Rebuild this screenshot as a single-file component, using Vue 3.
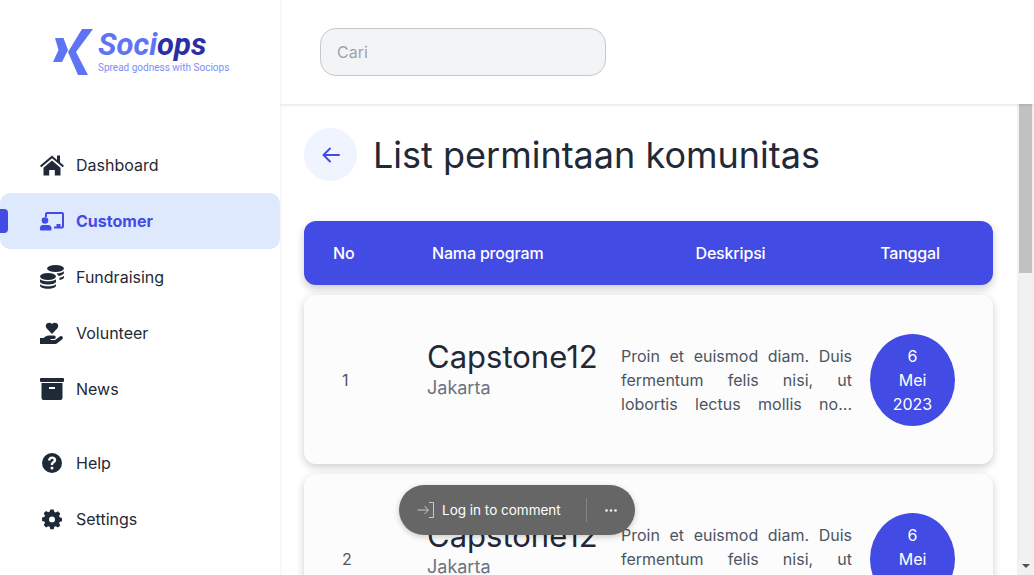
<template>
  <div class="app">
    <aside class="sidebar">
      <div class="brand">
        <svg class="brand-mark" viewBox="0 0 40 46" width="40" height="46">
          <path d="M2 9h8.500L15 21 9 33H0L5.500 21z" fill="#5f74f5" />
          <path d="M29 0H40L23 23 35 46H25L15 23z" fill="#5f74f5" />
        </svg>
        <div class="brand-text">
          <div class="brand-name">Soci<span>ops</span></div>
          <div class="brand-sub">Spread godness with Sociops</div>
        </div>
      </div>

      <nav class="menu">
        <a v-for="item in mainMenu" :key="item.label" class="menu-item" :class="{ active: item.active }">
          <svg class="menu-icon" viewBox="0 0 24 24" width="24" height="24" v-html="item.icon"></svg>
          <span>{{ item.label }}</span>
        </a>
      </nav>

      <nav class="menu menu-bottom">
        <a v-for="item in bottomMenu" :key="item.label" class="menu-item">
          <svg class="menu-icon" viewBox="0 0 24 24" width="24" height="24" v-html="item.icon"></svg>
          <span>{{ item.label }}</span>
        </a>
      </nav>
    </aside>

    <div class="right">
      <header class="topbar">
        <input class="search" type="text" placeholder="Cari" />
      </header>

      <div class="body">
        <main class="content">
          <div class="title-row">
            <button class="back">
              <svg viewBox="0 0 24 24" width="24" height="24" fill="none" stroke="#434be5" stroke-width="2" stroke-linecap="round" stroke-linejoin="round">
                <path d="M20 12H5M11 5.500 4.500 12l6.500 6.500" />
              </svg>
            </button>
            <h1>List permintaan komunitas</h1>
          </div>

          <div class="table-head">
            <div class="th-no">No</div>
            <div class="th-name">Nama program</div>
            <div class="th-desc">Deskripsi</div>
            <div class="th-date">Tanggal</div>
          </div>

          <div v-for="n in 2" :key="n" class="row">
            <div class="no">{{ n }}</div>
            <div class="program">
              <div class="program-name">Capstone12</div>
              <div class="program-city">Jakarta</div>
            </div>
            <p class="desc">Proin et euismod diam. Duis fermentum felis nisi, ut lobortis lectus mollis no...</p>
            <div class="date">
              <div class="date-circle">6<br />Mei<br />2023</div>
            </div>
          </div>
        </main>

        <div class="scrollbar">
          <div class="scroll-thumb"></div>
          <div class="scroll-arrow"></div>
        </div>
      </div>
    </div>

    <div class="comment-pill">
      <svg viewBox="0 0 18 18" width="18" height="18" fill="none" stroke="#c9c9c9" stroke-width="1">
        <path d="M0.500 9H11M7.500 5 11.500 9 7.500 13M12 1.500h4.500v15H12" />
      </svg>
      <span class="pill-text">Log in to comment</span>
      <span class="pill-divider"></span>
      <svg class="pill-dots" viewBox="0 0 12 3" width="12" height="3" fill="#f2f2f2">
        <circle cx="1.500" cy="1.500" r="1.300" /><circle cx="6" cy="1.500" r="1.300" /><circle cx="10.500" cy="1.500" r="1.300" />
      </svg>
    </div>
  </div>
</template>

<script setup>
const mainMenu = [
  {
    label: "Dashboard",
    icon: '<path d="M12 2.500 0 12.700l1.300 1.600L12 5.200l10.700 9.100 1.300-1.600-4-3.400V2.500h-3v4.500z"/><path d="M12 7.500 3.500 14.700V22.500h5.700v-5.500h5.600v5.500h5.700v-7.800z"/>',
  },
  {
    label: "Customer",
    active: true,
    icon: '<path d="M5 5a2 2 0 0 1 2-2H22a2 2 0 0 1 2 2V17.500a2 2 0 0 1-2 2H14V17.500h2.500V15h4v2.500h1.500V5H7V8H5z"/><circle cx="5" cy="11.500" r="3.300"/><path d="M3 16h5a3.500 3.500 0 0 1 3.500 3.500V20.500a1 1 0 0 1-1 1H1a1 1 0 0 1-1-1V19a3 3 0 0 1 3-3z"/>',
  },
  {
    label: "Fundraising",
    icon: '<ellipse cx="15.500" cy="3.500" rx="8.500" ry="3.500"/><path d="M16.500 8.500c3.200-.1 5.900-.9 7.500-2.200v1.500c0 1.500-2.300 2.800-5.500 3.300-.5-1-1.200-1.900-2-2.600z"/><path d="M19.500 12.800c1.900-.4 3.500-1.100 4.500-2v1.500c0 1.200-1.800 2.300-4.500 2.900z"/><ellipse cx="8" cy="11.500" rx="8" ry="3.500"/><path d="M0 14.200C1.800 15.600 4.800 16.300 8 16.300s6.200-.7 8-2.100v2.300c0 1.800-3.600 3-8 3s-8-1.200-8-3z"/><path d="M0 19.200c1.800 1.400 4.800 2.100 8 2.100s6.200-.7 8-2.100v1.300c0 1.900-3.600 3.300-8 3.300s-8-1.400-8-3.300z"/>',
  },
  {
    label: "Volunteer",
    icon: '<path d="M12 13 6.800 7.600C5.300 6 5.500 3.500 7.200 2.300c1.500-1 3.500-.7 4.800.7 1.300-1.400 3.300-1.700 4.800-.7 1.700 1.200 1.900 3.700.4 5.300z"/><path d="M0 17h3.500l2-1.500c1-.7 2.200-1 3.400-1H14a1.500 1.500 0 0 1 0 3.500h-3.500v1H15l5.200-3.700a1.800 1.800 0 0 1 2.300 2.700l-5 4a4 4 0 0 1-2.500.9H0z"/>',
  },
  {
    label: "News",
    icon: '<rect x="0" y="1" width="24" height="4" rx="1"/><path d="M1.500 6h21V21a2 2 0 0 1-2 2h-17a2 2 0 0 1-2-2zM9 10v2h6v-2z" fill-rule="evenodd"/>',
  },
];

const bottomMenu = [
  {
    label: "Help",
    icon: '<path fill-rule="evenodd" d="M12 2a10 10 0 1 1 0 20 10 10 0 0 1 0-20zM8 9.500h2.500c0-1 .7-1.700 1.600-1.700s1.500.6 1.500 1.300c0 1.400-2.800 1.700-2.800 4.400v.5h2.400v-.4c0-1.600 3-2 3-4.600 0-2.300-1.900-3.600-4.100-3.600C9.700 5.400 8 7.100 8 9.500zM12 15.500a1.500 1.500 0 1 0 0 3 1.500 1.500 0 0 0 0-3z"/>',
  },
  {
    label: "Settings",
    icon: '<path fill-rule="evenodd" d="M10 2h4l.7 2.800 1.700.7L19 4l2.800 2.800-1.500 2.600.7 1.600 2.700.8v4l-2.700.7-.7 1.700 1.500 2.500L19 23l-2.600-1.500-1.700.7L14 25h-4l-.7-2.800-1.700-.7L5 23l-2.800-2.800 1.500-2.500-.7-1.700L.3 15.300v-4l2.700-.7.7-1.700L2.200 6.300 5 3.500l2.600 1.500 1.700-.7zM12 10a3.500 3.500 0 1 0 0 7 3.500 3.500 0 0 0 0-7z" transform="translate(1.800 0.900) scale(0.85)"/>',
  },
];
</script>

<style scoped>
.app {
  position: relative;
  display: flex;
  height: 100vh;
  overflow: hidden;
  font-family: Inter, "Liberation Sans", sans-serif;
  color: #1f2937;
  background: #fff;
}

.sidebar {
  width: 280px;
  flex-shrink: 0;
  background: #fff;
  box-shadow: 1px 0 2px rgba(0, 0, 0, 0.05);
  z-index: 2;
}

.brand {
  display: flex;
  align-items: flex-start;
  height: 137px;
  padding: 29px 0 0 53px;
  box-sizing: border-box;
}

.brand-mark {
  flex-shrink: 0;
}

.brand-text {
  margin-left: 5px;
  font-family: Roboto, sans-serif;
}

.brand-name {
  font-size: 31px;
  line-height: 31px;
  font-weight: 700;
  font-style: italic;
  color: #5f74f5;
}

.brand-name span {
  color: #2b2fa5;
}

.brand-sub {
  margin-top: 1px;
  font-size: 10px;
  line-height: 14px;
  color: #7d8df7;
  white-space: nowrap;
}

.menu-bottom {
  margin-top: 18px;
}

.menu-item {
  position: relative;
  display: flex;
  align-items: center;
  height: 56px;
  padding-left: 40px;
  font-size: 16px;
  border-radius: 10px;
}

.menu-icon {
  margin-right: 12px;
  fill: #1f2937;
}

.menu-item.active {
  background: #dfe9fd;
  color: #434be5;
  font-weight: 700;
}

.menu-item.active .menu-icon {
  fill: #434be5;
}

.menu-item.active::before {
  content: "";
  position: absolute;
  left: 0;
  top: 16px;
  width: 8px;
  height: 24px;
  background: #434be5;
  border-radius: 0 4px 4px 0;
}

.right {
  flex: 1;
  min-width: 0;
  display: flex;
  flex-direction: column;
}

.topbar {
  height: 104px;
  flex-shrink: 0;
  padding: 28px 0 0 40px;
  box-sizing: border-box;
  background: #fff;
  box-shadow: 0 1px 3px rgba(0, 0, 0, 0.12);
  z-index: 1;
}

.search {
  width: 286px;
  height: 48px;
  padding: 0 16px;
  box-sizing: border-box;
  background: #f3f4f6;
  border: 1px solid #c5c8ce;
  border-radius: 16px;
  font-family: inherit;
  font-size: 16px;
  outline: none;
}

.search::placeholder {
  color: #9ca3af;
}

.body {
  flex: 1;
  min-height: 0;
  display: flex;
}

.content {
  flex: 1;
  min-width: 0;
  padding: 24px 24px 0;
}

.scrollbar {
  width: 17px;
  flex-shrink: 0;
  display: flex;
  flex-direction: column;
  justify-content: space-between;
  align-items: center;
  padding-bottom: 7px;
  box-sizing: border-box;
  background: #f1f1f1;
}

.scroll-thumb {
  width: 13px;
  height: 169px;
  background: #c1c1c1;
}

.scroll-arrow {
  width: 0;
  height: 0;
  border-left: 4px solid transparent;
  border-right: 4px solid transparent;
  border-top: 4px solid #505050;
}

.title-row {
  display: flex;
  align-items: center;
  gap: 16px;
  margin-bottom: 40px;
}

.back {
  width: 53px;
  height: 53px;
  flex-shrink: 0;
  display: flex;
  align-items: center;
  justify-content: center;
  padding: 0;
  border: 0;
  border-radius: 50%;
  background: #eff4ff;
}

h1 {
  margin: 0;
  padding-top: 2px;
  font-size: 36px;
  line-height: 51px;
  font-weight: 400;
}

.table-head {
  display: grid;
  grid-template-columns: 128px 200px 1fr 150px;
  align-items: center;
  height: 64px;
  margin-bottom: 10px;
  background: #434be5;
  color: #fff;
  font-size: 16px;
  font-weight: 500;
  letter-spacing: -0.17px;
  border-radius: 12px;
  box-shadow: 0 4px 8px rgba(0, 0, 0, 0.2);
}

.th-no {
  padding-left: 29px;
}

.th-desc,
.th-date {
  text-align: center;
}

.th-desc {
  padding-right: 14px;
}

.th-date {
  padding-right: 16px;
}

.row {
  display: grid;
  grid-template-columns: 123px 194px 231px 1fr;
  align-items: center;
  height: 169px;
  margin-bottom: 10px;
  background: #fcfcfc;
  border-radius: 12px;
  box-shadow: 0 3px 8px rgba(0, 0, 0, 0.2);
}

.no {
  padding-left: 38px;
  color: #4b5563;
}

.program {
  padding-bottom: 22px;
}

.program-name {
  font-size: 31px;
  line-height: 38px;
}

.program-city {
  font-size: 18px;
  line-height: 24px;
  color: #6b7280;
}

.desc {
  margin: 0;
  font-size: 16px;
  line-height: 24px;
  color: #4b5563;
  text-align: justify;
  text-align-last: justify;
}

.date {
  padding-left: 18px;
}

.date-circle {
  width: 85px;
  height: 92px;
  padding-top: 10px;
  box-sizing: border-box;
  text-align: center;
  background: #434be5;
  color: #fff;
  border-radius: 50%;
  font-size: 16px;
  line-height: 24px;
}

.comment-pill {
  position: absolute;
  left: 399px;
  top: 485px;
  width: 236px;
  height: 50px;
  display: flex;
  align-items: center;
  padding-left: 18px;
  box-sizing: border-box;
  background: #666;
  border-radius: 25px;
  box-shadow: 0 2px 6px rgba(0, 0, 0, 0.2);
  z-index: 3;
}

.pill-text {
  margin-left: 7px;
  color: #fff;
  font-size: 13.500px;
  white-space: nowrap;
}

.pill-divider {
  width: 1px;
  height: 24px;
  margin-left: 25px;
  background: #858585;
}

.pill-dots {
  margin-left: 18px;
}
</style>

<style>
body {
  margin: 0;
}
</style>
